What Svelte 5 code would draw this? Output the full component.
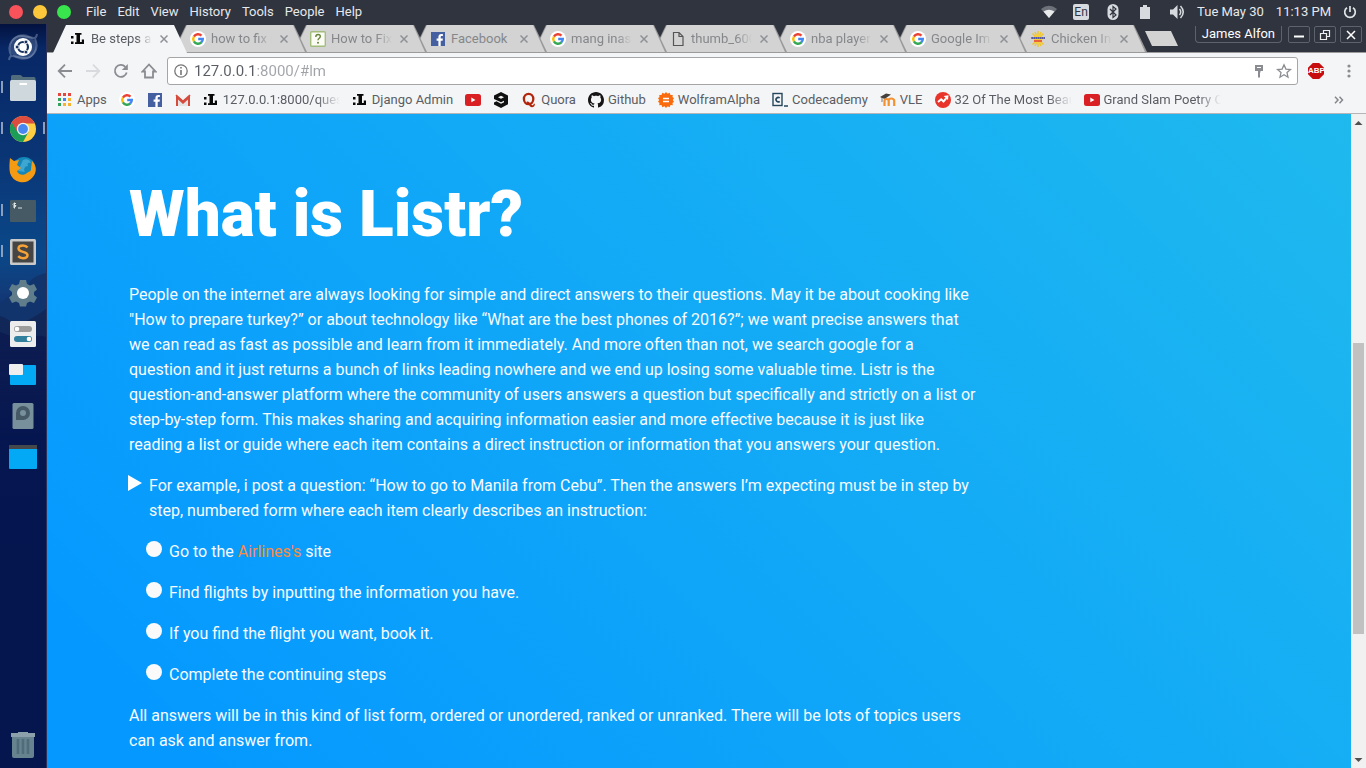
<script>
  const menus = ['File', 'Edit', 'View', 'History', 'Tools', 'People', 'Help'];
  const tabs = [
    { icon: 'listr', title: 'Be steps a', active: true },
    { icon: 'google', title: 'how to fix s' },
    { icon: 'wiki', title: 'How to Fix' },
    { icon: 'facebook', title: 'Facebook', whole: true },
    { icon: 'google', title: 'mang inas' },
    { icon: 'file', title: 'thumb_600' },
    { icon: 'google', title: 'nba player' },
    { icon: 'google', title: 'Google Im' },
    { icon: 'sun', title: 'Chicken In' }
  ];
  const bookmarks = [
    { icon: 'apps', label: 'Apps' },
    { icon: 'google', name: 'Google' },
    { icon: 'facebook', name: 'Facebook' },
    { icon: 'gmail', name: 'Gmail' },
    { icon: 'listr', label: '127.0.0.1:8000/ques', cut: true },
    { icon: 'listr', label: 'Django Admin' },
    { icon: 'youtube', name: 'YouTube' },
    { icon: 'gag', name: '9GAG' },
    { icon: 'quora', label: 'Quora' },
    { icon: 'github', label: 'Github' },
    { icon: 'wolfram', label: 'WolframAlpha' },
    { icon: 'codecademy', label: 'Codecademy' },
    { icon: 'moodle', label: 'VLE' },
    { icon: 'trend', label: '32 Of The Most Beau', cut: true },
    { icon: 'youtube', label: 'Grand Slam Poetry C', cut: true }
  ];
  const apps = [
    { id: 'ubuntu', name: 'Search' },
    { id: 'files', name: 'Files', run: true },
    { id: 'chrome', name: 'Chrome', run: true, focus: true },
    { id: 'firefox', name: 'Firefox' },
    { id: 'terminal', name: 'Terminal', run: true },
    { id: 'sublime', name: 'Sublime Text', run: true },
    { id: 'settings', name: 'Settings' },
    { id: 'tweak', name: 'Tweak Tool' },
    { id: 'workspace', name: 'Workspaces' },
    { id: 'disk', name: 'Disk' },
    { id: 'desktop', name: 'Desktop' }
  ];
  const steps = ['Find flights by inputting the information you have.', 'If you find the flight you want, book it.', 'Complete the continuing steps'];
</script>

{#snippet glyph(id)}
  <svg class="glyph" viewBox="0 0 16 16" aria-hidden="true">
    {#if id === 'google'}
      <circle cx="8" cy="8" r="8" fill="#fff" />
      <g fill="none" stroke-width="2.4">
        <path d="M3.9 5.6A4.8 4.8 0 0 1 11.5 4.7" stroke="#ea4335" />
        <path d="M3.9 10.4A4.8 4.8 0 0 1 3.9 5.6" stroke="#fbbc05" />
        <path d="M11.4 11.4A4.8 4.8 0 0 1 3.9 10.4" stroke="#34a853" />
        <path d="M8.2 8H12.8A4.8 4.8 0 0 1 11.2 11.6" stroke="#4285f4" />
      </g>
    {:else if id === 'facebook'}
      <rect x="1" y="1" width="14" height="14" fill="#4460a0" />
      <path d="M8.4 15V9.8H6.6V7.6h1.8V6c0-2 1.1-3 2.9-3h1.600v2.100h-1.100c-.9 0-1.100.4-1.100 1.100v1.400h2.200l-.3 2.200h-1.900V15z" fill="#fff" />
    {:else if id === 'gmail'}
      <path d="M1 3h14v11H1z" fill="#e4e4e4" />
      <path d="M1 14V3.4L8 9.6 15 3.4V14h-2V7.6L8 12 3 7.6V14z" fill="#d54b3d" />
      <path d="M1.3 3 8 8.8 14.7 3z" fill="#f4f4f4" />
      <path d="M1 3.2 8 9.5 15 3.2" fill="none" stroke="#d54b3d" stroke-width="1.7" />
    {:else if id === 'listr'}
      <path d="M1 5h2.500v2.500H1zM1 10.500h2.500V13H1zM5 2h6.500v1.800H10V11h1.800V8.500H14V13H5v-1.800h1.500V3.800H5z" fill="#080808" />
    {:else if id === 'wiki'}
      <rect x=".7" y=".7" width="14.600" height="14.600" rx="1" fill="#fafcf5" stroke="#a2bd7c" stroke-width="1.400" />
      <path d="M5.800 6C5.800 4.200 6.800 3.500 8.100 3.500S10.300 4.300 10.300 5.500C10.300 7.200 8 7.300 8 9.200" fill="none" stroke="#67853c" stroke-width="1.400" />
      <circle cx="8" cy="11.800" r="1" fill="#67853c" />
    {:else if id === 'file'}
      <path d="M3.500 1.500h5.500l4 4v9h-9.500zM9 1.500v4h4" fill="none" stroke="#555" stroke-width="1.200" />
    {:else if id === 'sun'}
      <g stroke="#f2c52c" stroke-width="1.500"><path d="M8 0v16M2.500 2.500l11 11M13.500 2.500l-11 11M5 1l6 14M11 1 5 15" /></g>
      <circle cx="8" cy="8" r="4.500" fill="#f5cf3d" />
      <path d="M1 6h14v2H1z" fill="#5a5aa0" /><path d="M4 9h8v2H4z" fill="#e8603c" /><path d="M1 7h14" stroke="#e0bd58" stroke-dasharray="1 1" stroke-width=".7" />
    {:else if id === 'apps'}
      {#each ['#e8453c', '#e8453c', '#e8453c', '#35a25a', '#4285f4', '#f7b32b', '#35a25a', '#f7b32b', '#f7b32b'] as c, i}
        <rect x={1 + (i % 3) * 5} y={1 + Math.floor(i / 3) * 5} width="3" height="3" fill={c} />
      {/each}
    {:else if id === 'youtube'}
      <rect y="2" width="16" height="12" rx="2.500" fill="#d82025" /><path d="M6.300 5.500v4.800L10.500 8z" fill="#fff" />
    {:else if id === 'gag'}
      <path fill-rule="evenodd" d="M8 0 15 3.500V12.300L8 16 1 12.500V10.500L3.500 9.200 8 11.700 11 10.200V8.800L8 10.300 1 6.900V3.500zM8 3.700 5 5.200 8 6.800 11 5.200z" fill="#111" />
    {:else if id === 'quora'}
      <ellipse cx="7.600" cy="7" rx="4.700" ry="5.200" fill="none" stroke="#b1260c" stroke-width="2.300" />
      <path d="M5.800 9.600C8.500 8.700 9.700 13.200 11.500 13.200c.9 0 1.200-.6 1.200-1.500h1.200c0 2-.9 3.500-3 3.500-3 0-2.700-4.400-5.100-4.200z" fill="#b1260c" />
    {:else if id === 'github'}
      <path fill="#171515" d="M8 0C3.580 0 0 3.580 0 8c0 3.540 2.290 6.530 5.470 7.590.4.070.55-.17.55-.38 0-.19-.01-.82-.01-1.490-2.010.37-2.530-.49-2.690-.94-.09-.23-.48-.94-.82-1.130-.28-.15-.68-.52-.01-.53.63-.01 1.080.58 1.230.82.720 1.210 1.870.87 2.330.66.070-.52.280-.87.510-1.070-1.780-.2-3.640-.89-3.640-3.950 0-.87.310-1.590.82-2.150-.08-.2-.36-1.020.08-2.120 0 0 .67-.21 2.200.82.640-.18 1.320-.27 2-.27s1.360.09 2 .27c1.530-1.040 2.200-.82 2.200-.82.440 1.100.16 1.920.08 2.120.51.560.82 1.270.82 2.150 0 3.070-1.870 3.750-3.650 3.950.290.250.540.730.540 1.480 0 1.070-.01 1.930-.01 2.200 0 .210.150.460.550.380A8.010 8.010 0 0 0 16 8c0-4.420-3.580-8-8-8z" />
    {:else if id === 'wolfram'}
      <path d="M8 0 9.500 1.800 11.600.8 12.500 3l2.300-.1-.3 2.200L16 6.300 14.800 8l1.200 1.800-1.500 1.100.3 2.300-2.300-.2-.9 2.200-2.100-1L8 16l-1.500-1.800-2.100 1L3.500 13l-2.300.2.300-2.300L0 9.800 1.200 8 0 6.300l1.500-1.200-.3-2.200L3.500 3l.9-2.200 2.100 1z" fill="#f96b0c" />
      <path d="M5 6.500h6M5 9.500h6" stroke="#fff" stroke-width="1.400" />
    {:else if id === 'codecademy'}
      <rect x="1" y="1.500" width="9" height="12" fill="none" stroke="#24475c" stroke-width="1.400" /><path d="M7.700 6A2.200 2.200 0 1 0 7.700 9.300M12 14h4" fill="none" stroke="#24475c" stroke-width="1.600" />
    {:else if id === 'moodle'}
      <path d="M4.500 14V9q0-2 2-2t2.200 2v5M8.700 14V8.500q0-2 2.500-2t3 2V14" fill="none" stroke="#f59230" stroke-width="2.200" /><path d="m0 5 6-3.500 5 1L6 6l-2 .8z" fill="#45403b" /><path d="M2 5v5" stroke="#45403b" stroke-width=".7" />
    {:else if id === 'trend'}
      <circle cx="8" cy="8" r="8" fill="#e8342b" /><path d="m3 10 3.200-2.700L8.500 9.500 12 5.300" fill="none" stroke="#fff" stroke-width="2" /><path d="M8.700 4 13.500 3.200 13 8z" fill="#fff" />
    {/if}
  </svg>
{/snippet}

{#snippet appIcon(id)}
  <svg class="app-icon" viewBox="0 0 32 32" aria-hidden="true">
    {#if id === 'ubuntu'}
      <circle cx="16" cy="16" r="13" fill="#b4c7df" opacity=".22" />
      <g fill="none" stroke="#d4e1ef" stroke-width="2" opacity=".3"><path d="M4 24C-1 13 7 4 16 5S29 10 30 3M28 8c5 11-3 20-12 19S3 22 2 29" /></g>
      <circle cx="16" cy="16" r="9" fill="#fff" />
      <circle cx="16" cy="16" r="5" fill="none" stroke="#18345e" stroke-width="2.200" />
      <g fill="#18345e" stroke="#fff" stroke-width=".8"><circle cx="10.100" cy="16" r="1.900" /><circle cx="19" cy="10.900" r="1.900" /><circle cx="19" cy="21.100" r="1.900" /></g>
    {:else if id === 'files'}
      <path d="M4 4.500q0-1.500 1.500-1.500h8l2.500 2h11q1.500 0 1.500 1.500V14H4z" fill="#516d7b" /><rect x="3" y="8" width="26" height="21" rx="1.500" fill="#cfd8dc" /><path d="M12.500 12h7.500" stroke="#fff" stroke-width="2" />
    {:else if id === 'chrome'}
      <circle cx="16" cy="16" r="13" fill="#ffce43" /><path d="M16 16 4.700 9.500A13 13 0 0 0 16 29l5.500-10z" fill="#1d9e58" /><path d="M4.700 9.500A13 13 0 0 1 27.800 10.500H16L10.500 19z" fill="#dc4d3f" /><circle cx="16" cy="16" r="6.200" fill="#f2f2f2" /><circle cx="16" cy="16" r="4.900" fill="#4788f1" />
    {:else if id === 'firefox'}
      <circle cx="17" cy="14.500" r="11.500" fill="#1287b8" /><path d="M16 6c4-2 7 0 8 3-3-1-4 0-3 3-3 0-5 3-3 6l-7-1z" fill="#3fa5d1" />
      <path d="M3 4 7 7l5-1-2 5 4 3-4 3c1 4 7 5 10 2 2-2 4-1 4-4l1-8c5 5 5 12 0 17A13 13 0 0 1 3 19C2 14 2.500 9 3 4z" fill="#f59a13" />
    {:else if id === 'terminal'}
      <rect x="3" y="5" width="26" height="22" rx="1" fill="#455a64" /><path d="M9 8.500q-3-.5-3 1t3 1q0 2-3 1.500M7.500 7.500v6M11 13h4" stroke="#dce3e5" fill="none" />
    {:else if id === 'sublime'}
      <rect x="3" y="3" width="26" height="26" rx="1.500" fill="#c9c9c9" /><rect x="5.500" y="5.500" width="21" height="21" fill="#454545" /><path d="M20.500 11.500Q19 9.500 16 9.500c-3 0-4.500 1.300-4.500 3 0 4.200 9 2.500 9 6.500 0 2-2 3.200-4.500 3.200q-3 0-4.800-2" fill="none" stroke="#f6a237" stroke-width="2.500" />
    {:else if id === 'settings'}
      <path d="M13 3h6l1 4 3 1.500 4-1.500 3 5.500-3 2.500v3l3 2.500-3 5.500-4-1.500L20 26l-1 3.500h-6L12 26l-3-1.500L5 26l-3-5.500L5 18v-3l-3-2.500L5 7l4 1.500L12 7z" fill="#607d8b" /><circle cx="16" cy="16" r="6" fill="#fff" />
    {:else if id === 'tweak'}
      <rect x="3" y="3" width="26" height="26" rx="1.500" fill="#ededed" /><rect x="7" y="8" width="18" height="6" rx="3" fill="#9c9c9c" /><circle cx="10" cy="11" r="2.300" fill="#fff" /><rect x="7" y="18" width="18" height="6" rx="3" fill="#307f9d" /><circle cx="22" cy="21" r="2.300" fill="#fff" />
    {:else if id === 'workspace'}
      <rect x="3" y="6" width="26" height="20" rx="1" fill="#03a9f4" /><rect x="2" y="5" width="14" height="11" rx="1" fill="#eee" />
    {:else if id === 'disk'}
      <rect x="5.500" y="3" width="21" height="26" rx="1.500" fill="#78909c" /><path d="M9 20v-7a7 7 0 1 1 7 7z" fill="#455a64" /><circle cx="16" cy="13" r="3" fill="#78909c" />
    {:else if id === 'desktop'}
      <rect x="2" y="4" width="28" height="24" rx="1" fill="#03a9f4" /><path d="M2 4h28v4H2z" fill="#46494b" />
    {:else if id === 'trash'}
      <path d="M5 7h22v20q0 2-2 2H7q-2 0-2-2z" fill="#688390" /><path d="M11 10v15M16 10v15M21 10v15" stroke="#506b79" stroke-width="2.600" /><path d="M4 4h7V3h10v1h7v4H4z" fill="#8ba0aa" />
    {/if}
  </svg>
{/snippet}

<div class="screen">
  <header class="system">
    <div class="lights"><button aria-label="Close"></button><button aria-label="Minimize"></button><button aria-label="Zoom"></button></div>
    <nav class="menus" aria-label="Application">
      {#each menus as m}<button>{m}</button>{/each}
    </nav>
    <div class="status">
      <svg class="glyph" viewBox="0 0 16 16"><path d="M0 5Q8-1.500 16 5l-8 9z" fill="#6d727a" /><path d="M2.500 7.500Q8 4 13.500 7.500L8 14z" fill="#e8eaec" /></svg>
      <span class="lang">En</span>
      <svg class="glyph" viewBox="0 0 16 16"><rect x="2.500" y="0" width="11" height="16" rx="5.500" fill="#d7dbdf" /><path d="m5 5 6 6-3 2.500v-11L11 5l-6 6" fill="none" stroke="#2f343f" stroke-width="1.200" /></svg>
      <svg class="glyph" viewBox="0 0 16 16"><path d="M3 3h3V1h4v2h3v12H3z" fill="#d7dbdf" /></svg>
      <svg class="glyph" viewBox="0 0 16 16"><path d="M1 5.500h3L8.500 1v14L4 10.500H1z" fill="#d7dbdf" /><path d="M10.500 5q2.500 3 0 6M11.500 2q5.500 6 0 12" fill="none" stroke="#d7dbdf" stroke-width="1.500" /></svg>
      <time>Tue May 30</time>
      <time>11:13 PM</time>
      <svg class="power" viewBox="0 0 14 14"><path d="M4 2.700A5.300 5.300 0 1 0 10 2.700M7 1v6" fill="none" stroke="#e0e3e6" stroke-width="1.700" /></svg>
    </div>
  </header>

  <div class="desk">
    <aside class="dock">
      <svg class="hills" viewBox="0 0 47 200" preserveAspectRatio="none" aria-hidden="true">
        <path d="M0 63Q9 57 14 50q8-6 14-4 4-10 19-13v167H0z" fill="#12346d" /><path d="M0 76q8 2 15 9 14-3 32-16v131H0z" fill="#102758" /><path d="M0 92q13 4 24 10 12-9 23-5v103H0z" fill="#0b1a50" opacity=".8" />
      </svg>
      {#each apps as a}
        <button class="app" class:run={a.run} class:focus={a.focus} aria-label={a.name}>{@render appIcon(a.id)}</button>
      {/each}
      <button class="app trash" aria-label="Trash">{@render appIcon('trash')}</button>
    </aside>

    <div class="browser">
      <div class="tabstrip">
        <div class="tabs">
          {#each tabs as t, i}
            <div class="tab" class:active={t.active} style:z-index={20 - i}>
              {@render glyph(t.icon)}
              <button class="title" class:whole={t.whole}>{t.title}</button>
              <button class="close" aria-label="Close tab"><svg viewBox="0 0 8 8"><path d="m.5.5 7 7m0-7-7 7" stroke="currentColor" stroke-width="1.500" /></svg></button>
            </div>
          {/each}
          <button class="newtab" aria-label="New tab"></button>
        </div>
        <div class="wm">
          <button class="user">James Alfon</button>
          <button class="ctl" aria-label="Minimize"><svg viewBox="0 0 12 12"><path d="M1 7.500h10" stroke="#fff" stroke-width="2" /></svg></button>
          <button class="ctl" aria-label="Restore"><svg viewBox="0 0 12 12"><path d="M4.500 4V1.500h6v6H8M1.500 4.500h6v6h-6z" fill="none" stroke="#eee" stroke-width="1.200" /></svg></button>
          <button class="ctl" aria-label="Close"><svg viewBox="0 0 12 12"><path d="m2 2 8 8m0-8-8 8" stroke="#fff" stroke-width="1.500" /></svg></button>
        </div>
      </div>

      <div class="toolbar">
        <button class="nav" aria-label="Back"><svg viewBox="0 0 16 16"><path d="M15 8H2M8 1.700 1.700 8 8 14.300" /></svg></button>
        <button class="nav dim" aria-label="Forward"><svg viewBox="0 0 16 16"><path d="M1 8h13M8 1.700 14.300 8 8 14.300" /></svg></button>
        <button class="nav" aria-label="Reload"><svg viewBox="0 0 16 16"><path d="M13.700 9.500A6 6 0 1 1 12.300 3.800" /><path d="M14.800 1v6h-6z" fill="#8a8c91" stroke="none" /></svg></button>
        <button class="nav" aria-label="Home"><svg viewBox="0 0 16 16"><path d="M1.500 8.500 8 1.500l6.500 7H12v6H4v-6z" /></svg></button>
        <div class="omnibox">
          <svg class="info" viewBox="0 0 14 14"><circle cx="7" cy="7" r="6.200" fill="none" stroke="#777" stroke-width="1.300" /><path d="M7 3v1.600M7 6v5" stroke="#777" stroke-width="1.600" /></svg>
          <input type="text" aria-label="Address" value="127.0.0.1:8000/#lm" />
          <button class="small" aria-label="Saved passwords"><svg viewBox="0 0 16 16"><path d="M4 2h8v6H9.500v1.500H9v5H7V8H4zM6 4v1h4V4z" fill="#8a8c91" /></svg></button>
          <button class="small" aria-label="Bookmark"><svg viewBox="0 0 16 16"><path d="m8 1.800 1.900 4.300 4.600.4-3.500 3.100 1 4.600-4-2.400-4 2.400 1-4.600-3.500-3.100 4.600-.4z" fill="none" stroke="#8a8c91" stroke-width="1.300" /></svg></button>
        </div>
        <button class="abp" aria-label="Adblock Plus">ABP</button>
        <button class="nav more" aria-label="Menu"><svg viewBox="0 0 16 16"><g fill="#8a8c91" stroke="none"><circle cx="8" cy="3" r="1.600" /><circle cx="8" cy="8" r="1.600" /><circle cx="8" cy="13" r="1.600" /></g></svg></button>
      </div>

      <nav class="bookmarks" aria-label="Bookmarks">
        {#each bookmarks as b}
          <a href="#lm" aria-label={b.name}>{@render glyph(b.icon)}{#if b.label}<span class:fade={b.cut}>{b.label}</span>{/if}</a>
        {/each}
        <button class="overflow" aria-label="More bookmarks"><svg viewBox="0 0 10 8"><path d="m1 .8 3 3.200-3 3.200M5.500.8l3 3.200-3 3.200" fill="none" stroke="#85878b" stroke-width="1.500" /></svg></button>
      </nav>

      <div class="viewport">
        <main>
          <article>
            <h1>What is Listr?</h1>
            <p>People on the internet are always looking for simple and direct answers to their questions. May it be about cooking like "How to prepare turkey?” or about technology like “What are the best phones of 2016?”; we want precise answers that we can read as fast as possible and learn from it immediately. And more often than not, we search google for a question and it just returns a bunch of links leading nowhere and we end up losing some valuable time. Listr is the question-and-answer platform where the community of users answers a question but specifically and strictly on a list or step-by-step form. This makes sharing and acquiring information easier and more effective because it is just like reading a list or guide where each item contains a direct instruction or information that you answers your question.</p>
            <div class="example">
              <svg viewBox="0 0 14 16" aria-hidden="true"><path d="M0 0v16l14-8z" fill="#fff" /></svg>
              <p>For example, i post a question: “How to go to Manila from Cebu”. Then the answers I’m expecting must be in step by step, numbered form where each item clearly describes an instruction:</p>
            </div>
            <ul>
              <li>Go to the <a href="#lm">Airlines's</a> site</li>
              {#each steps as s}<li>{s}</li>{/each}
            </ul>
            <p>All answers will be in this kind of list form, ordered or unordered, ranked or unranked. There will be lots of topics users can ask and answer from.</p>
          </article>
        </main>
        <div class="scrollbar" aria-hidden="true">
          <svg viewBox="0 0 15 17"><path d="M3.500 11h8l-4-4z" fill="#505050" /></svg>
          <div class="track"><div class="thumb"></div></div>
          <svg viewBox="0 0 15 17"><path d="M3.500 7h8l-4 4z" fill="#505050" /></svg>
        </div>
      </div>
    </div>
  </div>
</div>

<style>
  :global(body) { margin: 0; overflow: hidden; }
  * { box-sizing: border-box; }
  .screen { display: flex; flex-direction: column; height: 100vh; font: 13px/16px Roboto, "Liberation Sans", sans-serif; color: #5a5d63; }
  button { font: inherit; color: inherit; background: none; border: 0; padding: 0; margin: 0; }
  svg { display: block; flex: none; }
  .glyph { width: 16px; height: 16px; }

  .system { display: flex; align-items: center; height: 24px; flex: none; background: #2f343f; color: #e6e8eb; padding: 0 9px; }
  .lights { display: flex; gap: 10px; }
  .lights button { width: 14px; height: 14px; border-radius: 50%; background: #f8525a; }
  .lights button:nth-child(2) { background: #fdc73b; }
  .lights button:nth-child(3) { background: #38e54d; }
  .menus { display: flex; gap: 11px; margin-left: 15px; }
  .status { display: flex; align-items: center; gap: 16px; margin-left: auto; }
  .status time { margin-left: -4px; }
  .lang { width: 16px; background: #d7dbdf; color: #2f343f; border-radius: 2px; text-align: center; font-size: 12px; }
  .power { width: 14px; height: 14px; margin-left: -4px; }

  .desk { display: flex; flex: 1; min-height: 0; }
  .dock { position: relative; display: flex; flex-direction: column; width: 47px; flex: none; padding: 2px 0 3px; border-right: 1px solid #2b3158; background: linear-gradient(#03123f, #082765 24px, #0a3575 130px, #0a4889 230px, #123a78 270px, #0b1a50 330px, #051650 400px, #05154d); }
  .hills { position: absolute; top: 216px; left: 0; width: 100%; height: 200px; -webkit-mask: linear-gradient(#000 50%, transparent); mask: linear-gradient(#000 50%, transparent); }
  .app { position: relative; display: grid; place-items: center; height: 41px; width: 100%; }
  .app-icon { width: 32px; height: 32px; }
  .app::before, .app.focus::after { position: absolute; top: 14px; left: 1px; width: 2px; height: 12px; background: #8b9ebc; }
  .app.run::before { content: ""; }
  .app.focus::after { content: ""; left: auto; right: 1px; }
  .trash { margin-top: auto; }

  .browser { display: flex; flex-direction: column; flex: 1; min-width: 0; background: #f4f5f7; }
  .tabstrip { display: flex; height: 29px; flex: none; background: #2f343f; padding: 1px 4px 0 6px; border-bottom: 1px solid #9b9b9b; }
  .tabs { display: flex; flex: 1; min-width: 0; }
  .tab { position: relative; display: flex; align-items: center; width: 134px; flex: none; margin-right: -14px; padding: 0 19px 0 17px; clip-path: polygon(13px 0, calc(100% - 13px) 0, 100% 100%, 0 100%); background: #999; color: #85878b; }
  .tab::before { content: ""; position: absolute; inset: 0; z-index: -1; background: #d3d3d3; clip-path: polygon(14px 0, calc(100% - 14px) 0, calc(100% - 2px) 100%, 1px 100%); }
  .tab.active { margin-bottom: -1px; color: #5a5d63; background: #f4f5f7; }
  .tab.active::before { background: #f4f5f7; }
  .title { width: 61px; margin-left: 5px; white-space: nowrap; text-align: left; -webkit-mask: linear-gradient(90deg, #000 75%, transparent); mask: linear-gradient(90deg, #000 75%, transparent); }
  .title.whole { -webkit-mask: none; mask: none; }
  .close { margin-left: auto; color: #8f9196; }
  .close svg { width: 8px; height: 8px; }
  .newtab { align-self: center; width: 33px; height: 15px; margin-left: 12px; background: #d3d3d3; clip-path: polygon(0 0, 26px 0, 100% 100%, 7px 100%); }
  .wm { display: flex; align-items: flex-start; gap: 4px; }
  .wm button { display: grid; place-items: center; height: 17px; border: 1px solid #5d626c; border-radius: 2px; margin-top: 1px; color: #fff; }
  .wm .user { padding: 0 6px; border-top: 0; border-radius: 0 0 4px 4px; margin-right: 2px; }
  .wm .ctl { width: 22px; }
  .ctl svg { width: 12px; height: 12px; }

  .toolbar { display: flex; align-items: center; height: 36px; flex: none; padding: 0 9px 0 10px; }
  .nav svg { width: 16px; height: 16px; fill: none; stroke: #8a8c91; stroke-width: 1.8px; }
  .nav { margin-right: 12px; }
  .nav.dim { opacity: .25; }
  .omnibox { display: flex; align-items: center; flex: 1; height: 28px; margin-left: -2px; margin-right: 10px; padding: 0 5px 0 6px; border: 1px solid #a6a6a6; border-radius: 3px; background: #fff; }
  .info { width: 14px; height: 14px; }
  input { flex: 1; min-width: 0; margin: 0 0 0 6px; padding: 0; border: 0; outline: 0; font: 15px/20px Roboto, "Liberation Sans", sans-serif; color: transparent; background: linear-gradient(90deg, #5a5d63 60px, #a0a3a8 60px); -webkit-background-clip: text; background-clip: text; }
  .small { margin-left: 9px; }
  .small svg { width: 16px; height: 16px; }
  .abp { width: 16px; height: 16px; margin-right: 17px; background: #c70d0d; clip-path: polygon(30% 0, 70% 0, 100% 30%, 100% 70%, 70% 100%, 30% 100%, 0 70%, 0 30%); font: bold 8px/16px "Liberation Sans", sans-serif; color: #fff; text-align: center; }
  .nav.more { margin-right: 0; }

  .bookmarks { display: flex; align-items: center; height: 25px; flex: none; gap: 12px; padding: 0 22px 3px 10px; border-bottom: 1px solid #b6b4b6; }
  .bookmarks a { display: flex; align-items: center; gap: 4px; flex: none; color: inherit; text-decoration: none; white-space: nowrap; }
  .fade { width: 117px; -webkit-mask: linear-gradient(90deg, #000 80%, transparent); mask: linear-gradient(90deg, #000 80%, transparent); }
  .overflow { margin-left: auto; }
  .overflow svg { width: 10px; height: 8px; }

  .viewport { display: flex; flex: 1; min-height: 0; }
  main { flex: 1; min-width: 0; padding: 61px 82px 0; overflow: hidden; background: linear-gradient(45deg, #0599ff 8%, #1fb9ee); color: #f8fbff; font-size: 16px; line-height: 25px; }
  article { max-width: 848px; }
  h1 { margin: 0 0 27px; font-size: 64px; line-height: 80px; font-weight: 900; color: #fff; }
  p { margin: 0 0 16px; }
  .example { display: flex; gap: 7px; margin-left: -1px; }
  .example svg { width: 14px; height: 16px; margin-top: 2px; }
  ul { display: grid; gap: 16px; list-style: none; margin: 0 0 16px; padding: 0 0 0 17px; }
  li::before { content: ""; float: left; width: 16px; height: 16px; margin: 2px 7px 0 0; border-radius: 50%; background: #fafafa; }
  li a { color: #fb8c3c; text-decoration: none; }

  .scrollbar { display: flex; flex-direction: column; width: 15px; flex: none; background: #f1f1f1; }
  .scrollbar svg { width: 15px; height: 17px; }
  .track { display: grid; flex: 1; grid-template-rows: 212fr 291fr 117fr; }
  .thumb { grid-row: 2; margin: 0 2px; background: #c1c1c1; }
</style>
